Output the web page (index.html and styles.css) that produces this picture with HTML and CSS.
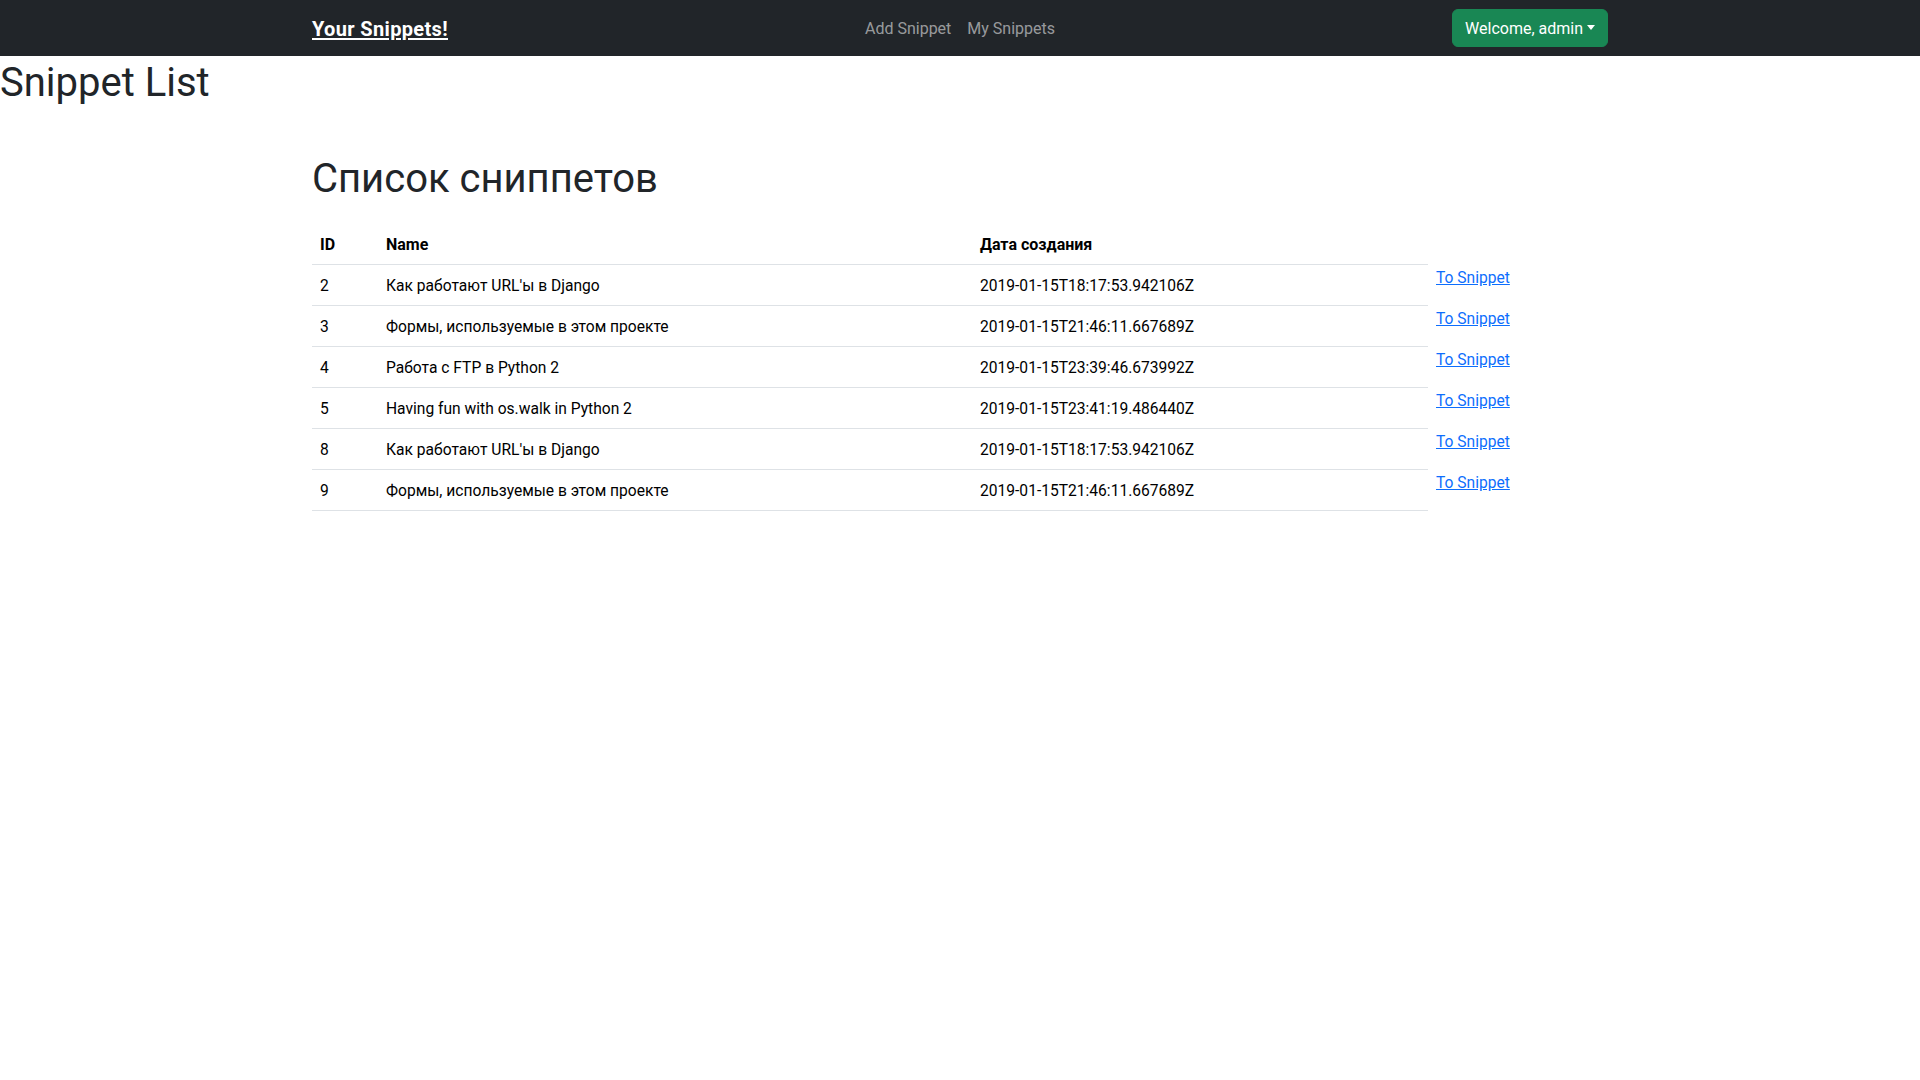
FILE: index.html
```html
<!DOCTYPE html>
<html lang="ru">
<head>
<meta charset="utf-8">
<title>Snippet List</title>
<link rel="stylesheet" href="styles.css">
</head>
<body>
<nav class="navbar">
  <div class="container nav-inner">
    <a class="brand" href="#">Your Snippets!</a>
    <ul class="nav-links">
      <li><a class="nav-link" href="#">Add Snippet</a></li>
      <li><a class="nav-link" href="#">My Snippets</a></li>
    </ul>
    <div class="nav-right">
      <button class="btn-user" type="button">Welcome, admin<span class="caret"></span></button>
    </div>
  </div>
</nav>

<h1 class="page-title">Snippet List</h1>

<div class="container content">
  <h1 class="list-title">Список сниппетов</h1>
  <table class="table">
    <colgroup>
      <col class="c-id"><col class="c-name"><col class="c-date"><col class="c-link">
    </colgroup>
    <thead>
      <tr><th>ID</th><th>Name</th><th>Дата создания</th><th class="go"></th></tr>
    </thead>
    <tbody>
      <tr><td>2</td><td>Как работают URL'ы в Django</td><td>2019-01-15T18:17:53.942106Z</td><td class="go"><a href="#">To Snippet</a></td></tr>
      <tr><td>3</td><td>Формы, используемые в этом проекте</td><td>2019-01-15T21:46:11.667689Z</td><td class="go"><a href="#">To Snippet</a></td></tr>
      <tr><td>4</td><td>Работа с FTP в Python 2</td><td>2019-01-15T23:39:46.673992Z</td><td class="go"><a href="#">To Snippet</a></td></tr>
      <tr><td>5</td><td>Having fun with os.walk in Python 2</td><td>2019-01-15T23:41:19.486440Z</td><td class="go"><a href="#">To Snippet</a></td></tr>
      <tr><td>8</td><td>Как работают URL'ы в Django</td><td>2019-01-15T18:17:53.942106Z</td><td class="go"><a href="#">To Snippet</a></td></tr>
      <tr><td>9</td><td>Формы, используемые в этом проекте</td><td>2019-01-15T21:46:11.667689Z</td><td class="go"><a href="#">To Snippet</a></td></tr>
    </tbody>
  </table>
</div>
</body>
</html>
```
FILE: styles.css
```css
* { box-sizing: border-box; }

body {
  margin: 0;
  font-family: Roboto, "Noto Sans", sans-serif;
  font-size: 16px;
  line-height: 1.5;
  color: #212529;
  background: #fff;
}

.container {
  max-width: 1320px;
  margin: 0 auto;
  padding: 0 12px;
}

/* Navbar */
.navbar {
  background: #212529;
  padding: 8px 0;
}
.nav-inner {
  display: flex;
  align-items: center;
  height: 40px;
}
.brand {
  flex: 1 1 0;
  font-size: 20px;
  font-weight: 700;
  color: #fff;
  text-decoration: underline;
  text-underline-offset: 2px;
  letter-spacing: 0.35px;
  line-height: 30px;
  padding: 6px 0 4px;
}
.nav-links {
  display: flex;
  list-style: none;
  margin: 0;
  padding: 0;
}
.nav-link {
  display: block;
  padding: 9px 8px 7px;
  color: rgba(255, 255, 255, 0.55);
  text-decoration: none;
}
.nav-right {
  flex: 1 1 0;
  display: flex;
  justify-content: flex-end;
}
.btn-user {
  font-family: inherit;
  font-size: 16px;
  line-height: 24px;
  color: #fff;
  background: #198754;
  border: 1px solid #198754;
  border-radius: 6px;
  padding: 7px 12px 5px;
  cursor: pointer;
}
.caret {
  display: inline-block;
  margin-left: 4px;
  vertical-align: 4px;
  border-top: 5px solid #fff;
  border-left: 4px solid transparent;
  border-right: 4px solid transparent;
}

/* Headings */
.page-title,
.list-title {
  font-size: 40px;
  font-weight: 400;
  line-height: 48px;
  margin: 0 0 8px;
  padding-top: 3px;
  height: 48px;
  color: #212529;
}
.content {
  margin-top: 48px;
}
.list-title {
  margin-bottom: 24px;
}

/* Table */
.table {
  width: 100%;
  border-collapse: collapse;
  table-layout: fixed;
  color: #000;
}
.c-id { width: 66px; }
.c-name { width: 594px; }
.c-date { width: 456px; }
.c-link { width: 180px; }

.table th,
.table td {
  padding: 9px 8px 7px;
  text-align: left;
  vertical-align: top;
  border-bottom: 1px solid #dee2e6;
  line-height: 24px;
}
.table th { font-weight: 700; }
.table td { font-size: 15.6px; }
.table .go {
  border-bottom: none;
  padding: 1px 8px 0;
}
.go a {
  color: #0d6efd;
  text-decoration: underline;
}
```
